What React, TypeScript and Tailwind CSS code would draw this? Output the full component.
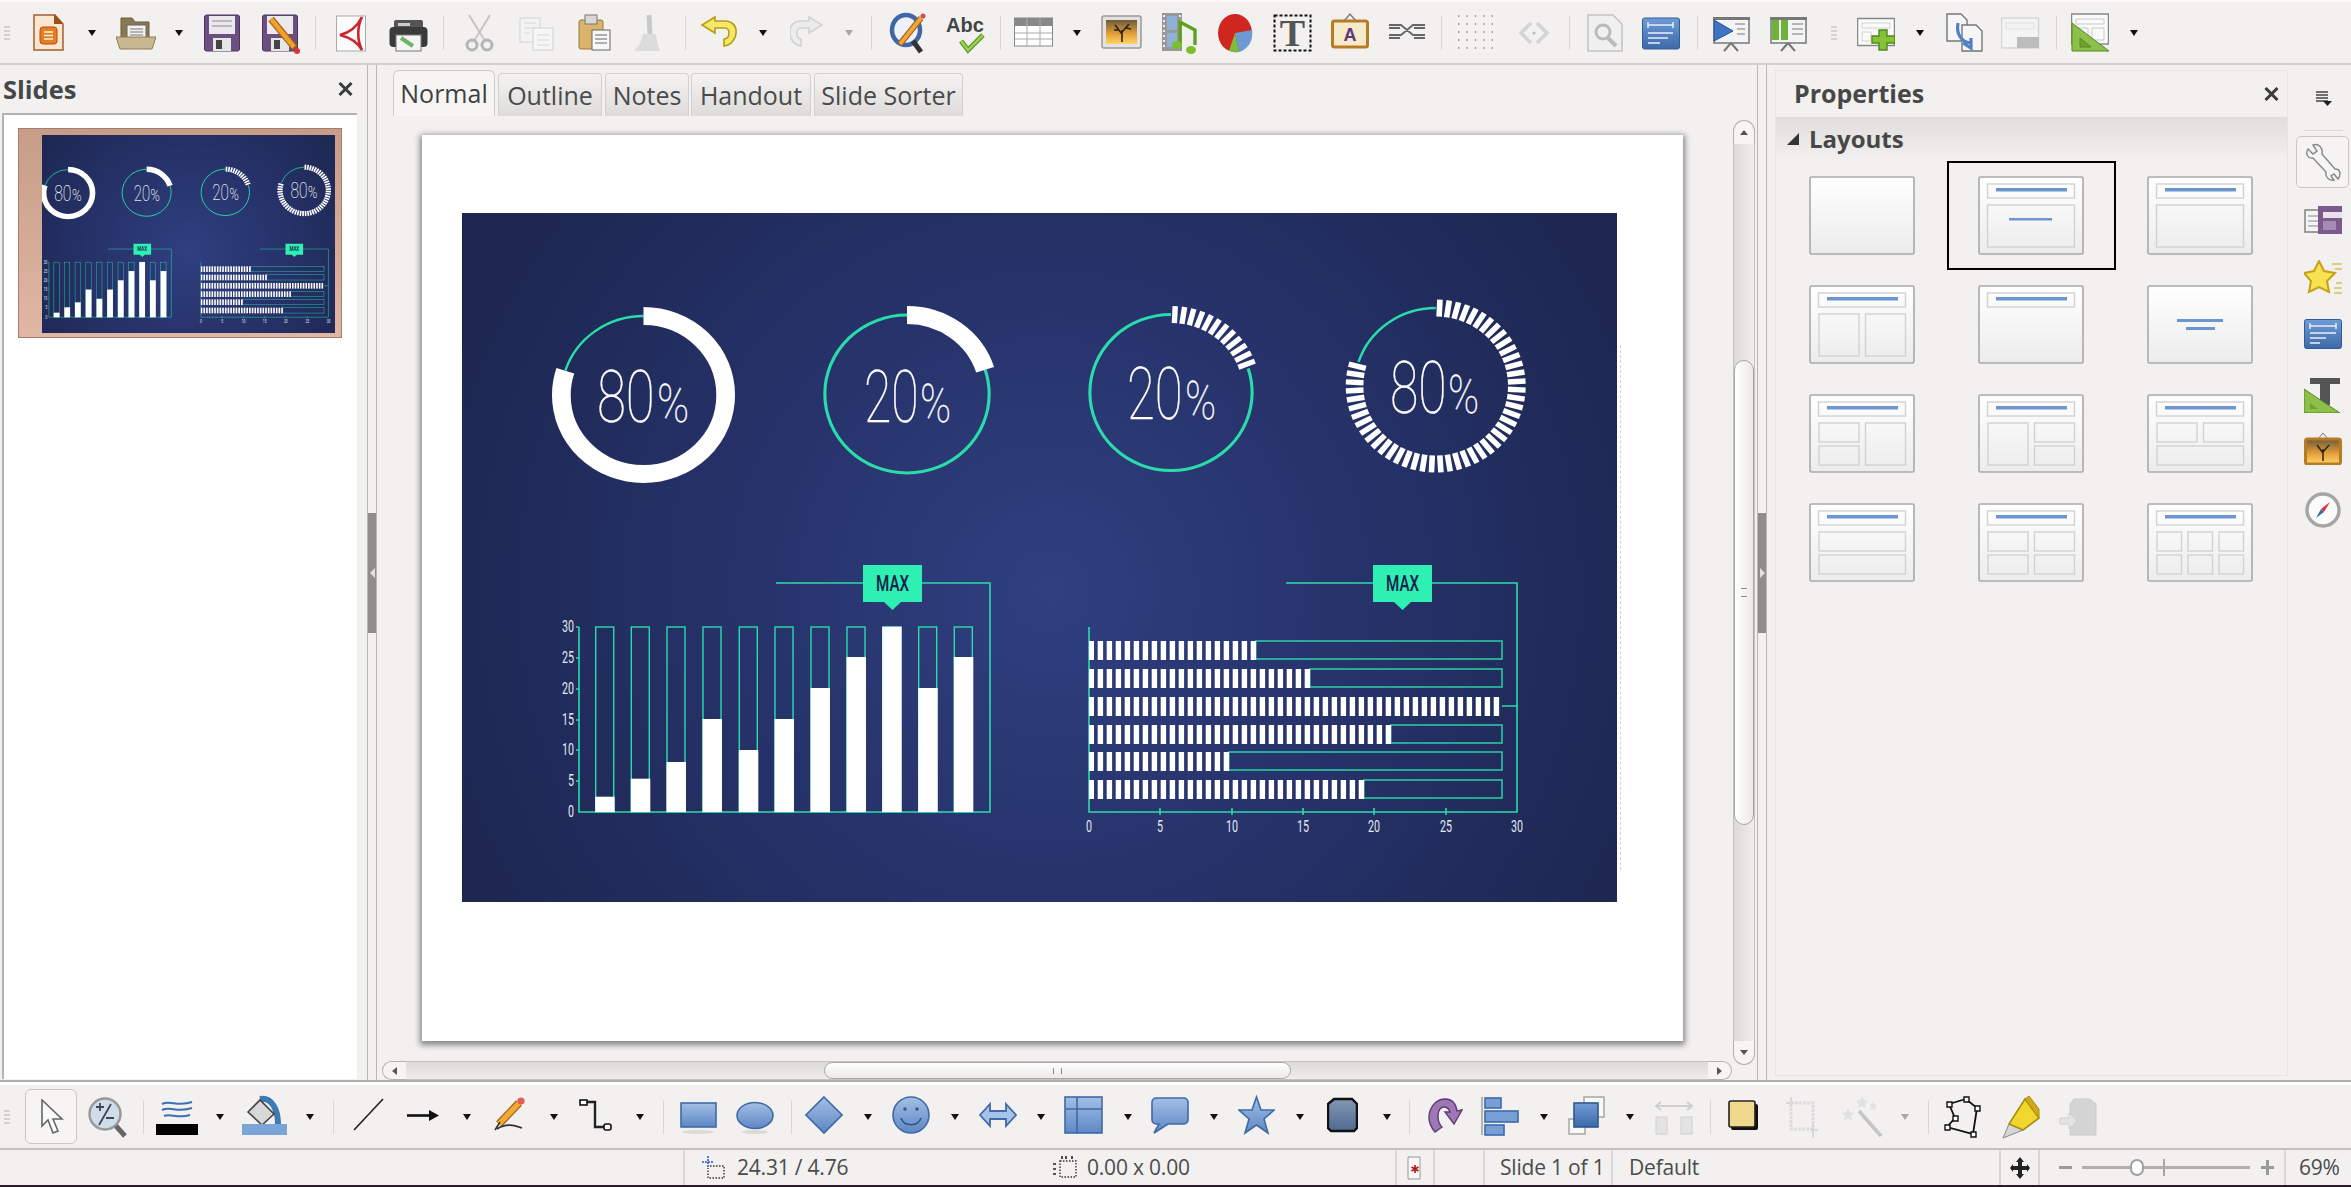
import type { ReactNode } from 'react';

const UI = "font-['Open_Sans','Noto_Sans',sans-serif]";

function Ic({ w, c, h = 46, children }: { w: number; c?: string; h?: number; children: ReactNode }) {
  return (
    <svg width={w} height={h} viewBox={`0 0 ${w} ${h}`} className={`shrink-0 ${c ?? ''}`}>
      {children}
    </svg>
  );
}

function Dd({ c, off }: { c: string; off?: boolean }) {
  return (
    <svg width={8} height={6} viewBox="0 0 8 6" className={`shrink-0 ${c}`}>
      <path d="M0 0H8L4 6Z" fill={off ? '#a8a8a8' : '#111'} />
    </svg>
  );
}

function Sep({ c }: { c: string }) {
  return <div className={`h-[34px] w-px shrink-0 bg-[#d9d7d4] ${c}`} />;
}

function Grip({ c }: { c: string }) {
  return (
    <svg width={6} height={14} viewBox="0 0 6 14" className={`shrink-0 ${c}`}>
      <path d="M0 1H6M0 5H6M0 9H6M0 13H6" stroke="#c9c7c4" strokeWidth="1.5" />
    </svg>
  );
}

function Defs() {
  return (
    <svg width={0} height={0} className="absolute">
      <defs>
        <radialGradient id="slideBg" gradientUnits="userSpaceOnUse" cx="1050" cy="590" r="640">
          <stop offset="0" stopColor="#2f3f80" />
          <stop offset="0.5" stopColor="#263269" />
          <stop offset="1" stopColor="#1d2751" />
        </radialGradient>
        <linearGradient id="shape" x1="0" y1="0" x2="0" y2="1">
          <stop offset="0" stopColor="#a3bfe6" />
          <stop offset="1" stopColor="#5d87c4" />
        </linearGradient>
        <linearGradient id="sunset" x1="0" y1="0" x2="0" y2="1">
          <stop offset="0" stopColor="#6d5a3a" />
          <stop offset="0.6" stopColor="#e9a13a" />
          <stop offset="1" stopColor="#fbd36a" />
        </linearGradient>
        <linearGradient id="thumbBg" x1="0" y1="0" x2="0" y2="1">
          <stop offset="0" stopColor="#ffffff" />
          <stop offset="1" stopColor="#ececec" />
        </linearGradient>
        <linearGradient id="blueBox" x1="0" y1="0" x2="0" y2="1">
          <stop offset="0" stopColor="#6f9bd6" />
          <stop offset="1" stopColor="#3e69a8" />
        </linearGradient>
        <linearGradient id="cube" x1="0" y1="0" x2="0" y2="1">
          <stop offset="0" stopColor="#8398b4" />
          <stop offset="1" stopColor="#4f6a8f" />
        </linearGradient>
      </defs>
    </svg>
  );
}

const TEAL = '#2bdcab';

function Ring({ cx, cy, r, sw, end, line, ticks, tw }: { cx: number; cy: number; r: number; sw: number; end: number; line: number; ticks?: number; tw?: number }) {
  const rest = 360 - end;
  return (
    <g transform={`translate(${cx} ${cy}) scale(1.04 1) rotate(-90)`}>
      <circle r={r} fill="none" stroke={TEAL} strokeWidth={line} pathLength={360} strokeDasharray={`${rest} ${end}`} strokeDashoffset={-end} />
      {ticks ? (
        Array.from({ length: ticks }, (_, i) => (
          <line
            key={i}
            x1={r - sw / 2}
            x2={r + sw / 2}
            y1={0}
            y2={0}
            stroke="#fff"
            strokeWidth={tw}
            transform={`rotate(${((i + 0.45) * end) / ticks})`}
          />
        ))
      ) : (
        <circle r={r} fill="none" stroke="#fff" strokeWidth={sw} pathLength={360} strokeDasharray={`${end} ${rest}`} />
      )}
    </g>
  );
}

// thin digits squeezed sideways, the slide's typeface is far narrower than Roboto
function Pct({ v, x, y, w, px, pw }: { v: string; x: number; y: number; w: number; px: number; pw: number }) {
  return (
    <g fill="#fff" stroke="#fff" strokeWidth="0.35" fontFamily="Roboto, sans-serif" fontWeight={100}>
      <text transform={`translate(${x} ${y}) scale(${w / 80.3} 1)`} fontSize={73}>{v}</text>
      <text transform={`translate(${px} ${y}) scale(${pw / 38} 1)`} fontSize={53}>%</text>
    </g>
  );
}

function MaxTag({ x }: { x: number }) {
  return (
    <g>
      <path d={`M${x} 565H${x + 59}V602H${x + 38}L${x + 29.5} 610L${x + 21} 602H${x}Z`} fill="#2ef0b3" />
      <text x={x + 13} y={591} fontSize={22} fontWeight={500} fill="#14204a" fontFamily="Roboto, sans-serif" textLength={33} lengthAdjust="spacingAndGlyphs">MAX</text>
    </g>
  );
}

const BARS = [
  [595.7, 796.7], [631.3, 778.7], [667, 762], [703, 719], [739.3, 750], [775, 719],
  [811, 688], [847, 657], [882.7, 626.7], [918.7, 688], [954.3, 657],
];
const HROWS = [
  [641, 17], [669, 23], [697, 44], [725, 32], [752, 14], [780, 29],
];

function SlideArt({ box, w, h }: { box: string; w: number; h: number }) {
  return (
    <svg width={w} height={h} viewBox={box} preserveAspectRatio="none" className="block shrink-0">
      <rect x="400" y="150" width="1300" height="800" fill="url(#slideBg)" />
      <Ring cx={643.5} cy={395} r={79} sw={18} end={288} line={2.4} />
      <Ring cx={907} cy={394} r={79} sw={18} end={72} line={3} />
      <Ring cx={1171} cy={392.5} r={78} sw={17} end={72} line={3} ticks={12} tw={5.2} />
      <Ring cx={1435.7} cy={386} r={78} sw={17} end={288} line={2.4} ticks={48} tw={5.4} />
      <Pct v="80" x={597} y={422} w={58} px={657} pw={31} />
      <Pct v="20" x={864} y={422} w={55} px={920} pw={30} />
      <Pct v="20" x={1127} y={419} w={56} px={1185} pw={30} />
      <Pct v="80" x={1390} y={413} w={57} px={1448} pw={30} />

      <path d="M776 583H990V812H579V627M576 627H579M576 658H579M576 689H579M576 720H579M576 750H579M576 781H579" fill="none" stroke={TEAL} strokeWidth="1.6" />
      {BARS.map(([x, top]) => (
        <g key={x}>
          <rect x={x} y={627} width={18} height={185} fill="none" stroke={TEAL} strokeWidth="1.4" />
          <rect x={x - 0.5} y={top} width={19.5} height={812 - top} fill="#fff" />
        </g>
      ))}
      <MaxTag x={863} />
      {[['30', 632], ['25', 663], ['20', 694], ['15', 725], ['10', 755], ['5', 786], ['0', 817]].map(([t, y]) => (
        <text key={t} x={574} y={y} textAnchor="end" fontSize={16} fill="#e6e9f2" fontFamily="Roboto, sans-serif" fontWeight={400} textLength={t.length === 2 ? 12 : 6} lengthAdjust="spacingAndGlyphs">{t}</text>
      ))}

      <path d="M1286 583H1517V812H1089V627M1160 808V815M1232 808V815M1303 808V815M1374 808V815M1446 808V815M1502 706H1517" fill="none" stroke={TEAL} strokeWidth="1.6" />
      {HROWS.map(([y, n]) => {
        const end = 1097.7 + 9 * n + 5;
        return (
          <g key={y}>
            {n < 40 && <rect x={end} y={y} width={1502 - end} height={18} fill="none" stroke={TEAL} strokeWidth="1.4" />}
            <rect x={1089} y={y} width={5} height={19} fill="#fff" />
            {Array.from({ length: n + 1 }, (_, k) => (
              <rect key={k} x={1097.7 + 9 * k} y={y} width={5.4} height={19} fill="#fff" />
            ))}
          </g>
        );
      })}
      <MaxTag x={1373} />
      {[['0', 1089], ['5', 1160], ['10', 1232], ['15', 1303], ['20', 1374], ['25', 1446], ['30', 1517]].map(([t, x]) => (
        <text key={t} x={x} y={832} textAnchor="middle" fontSize={16} fill="#e6e9f2" fontFamily="Roboto, sans-serif" fontWeight={400} textLength={t.length === 2 ? 12 : 6} lengthAdjust="spacingAndGlyphs">{t}</text>
      ))}
    </svg>
  );
}

function TopToolbar() {
  return (
    <div className="flex h-[63px] shrink-0 items-center border-t-2 border-[#fafafa] pl-[4px]">
      <Grip c="" />
      <Ic w={31} c="ml-[23px]">
        <path d="M1 5H22L30 14V40H1Z" fill="#f9e7d3" stroke="#a55f2a" strokeWidth="1.5" />
        <path d="M21 4L30 14H21Z" fill="#9c4f1c" />
        <rect x="7" y="17" width="17" height="17" rx="3" fill="#e67e22" stroke="#b34d10" />
        <path d="M11 22H20M11 25.5H20M11 29H20" stroke="#fff2e0" strokeWidth="1.5" />
      </Ic>
      <Dd c="ml-[24px]" />
      <Ic w={40} c="ml-[20px]">
        <path d="M5 8H16L19 12H33V28H5Z" fill="#8b7852" stroke="#6a5a3a" />
        <rect x="11" y="15" width="19" height="15" fill="#f1f1ef" stroke="#666" />
        <path d="M14 19H27M14 22H27M14 25H27" stroke="#777" />
        <path d="M0 27H40L36 39H4Z" fill="#c9b88f" stroke="#8e7c57" />
      </Ic>
      <Dd c="ml-[19px]" />
      <Ic w={36} c="ml-[21px]">
        <rect x="0.5" y="5" width="35" height="36" rx="2" fill="#6b4f80" stroke="#4b3560" />
        <rect x="5" y="6" width="26" height="18" fill="#ebe8ee" />
        <path d="M8 11H28M8 16H28" stroke="#aaa" strokeWidth="1.4" />
        <rect x="9" y="28" width="18" height="13" fill="#e6e6e6" />
        <rect x="12" y="30" width="6" height="9" fill="#444" />
      </Ic>
      <Ic w={39} c="ml-[22px]">
        <rect x="0.5" y="5" width="35" height="36" rx="2" fill="#6b4f80" stroke="#4b3560" />
        <rect x="5" y="6" width="26" height="18" fill="#ebe8ee" />
        <rect x="9" y="28" width="18" height="13" fill="#e6e6e6" />
        <rect x="12" y="30" width="6" height="9" fill="#444" />
        <path d="M9 9L33 38" stroke="#a85f14" strokeWidth="7" />
        <path d="M9 9L32 37" stroke="#f0a22f" strokeWidth="4.5" />
        <circle cx="35" cy="41" r="3" fill="#d9343a" />
      </Ic>
      <Sep c="ml-[14px]" />
      <Ic w={30} c="ml-[20px]">
        <rect x="0.5" y="6" width="29" height="35" fill="#fbfbfb" stroke="#aaa" />
        <path d="M26 7C21 17 12 23 4 25C12 27 21 31 26 40C21 30 21 17 26 7Z" fill="none" stroke="#c9252b" strokeWidth="2.6" />
      </Ic>
      <Ic w={39} c="ml-[23px]">
        <rect x="5" y="10" width="29" height="10" rx="2" fill="#555" />
        <rect x="0.5" y="17" width="38" height="20" rx="4" fill="#3a3a3a" />
        <rect x="9" y="13" width="12" height="3" fill="#ccc" />
        <rect x="7" y="25" width="25" height="16" fill="#f4f4f4" stroke="#777" />
        <path d="M12 28L24 36" stroke="#6fb36a" strokeWidth="4" />
      </Ic>
      <Sep c="ml-[15px]" />
      <Ic w={29} c="ml-[21px]">
        <path d="M4 5L20 31M25 5L9 31" stroke="#c5c5c5" strokeWidth="2" />
        <circle cx="7" cy="35" r="5" fill="none" stroke="#b5b5b5" strokeWidth="3" />
        <circle cx="22" cy="35" r="5" fill="none" stroke="#b5b5b5" strokeWidth="3" />
      </Ic>
      <Ic w={35} c="ml-[25px]">
        <rect x="1" y="8" width="20" height="24" fill="#f3f3f3" stroke="#d2d2d2" />
        <rect x="14" y="18" width="20" height="22" fill="#f6f6f6" stroke="#d2d2d2" />
        <path d="M5 13H17M5 18H17M5 23H11M18 25H30M18 30H30M18 35H30" stroke="#d8d8d8" />
      </Ic>
      <Ic w={33} c="ml-[24px]">
        <rect x="1" y="10" width="24" height="29" rx="2" fill="#dcb36a" stroke="#9b7a3d" />
        <rect x="7" y="5" width="12" height="9" fill="#d8d8d8" stroke="#777" />
        <rect x="14" y="20" width="18" height="20" fill="#f7f7f7" stroke="#666" />
        <path d="M17 25H29M17 29H29M17 33H29" stroke="#666" />
      </Ic>
      <Ic w={28} c="ml-[22px]">
        <path d="M16 5L17 24" stroke="#c9c9c9" strokeWidth="5" />
        <path d="M10 24H23C24 32 25 36 27 41H1C6 36 9 30 10 24Z" fill="#dcdcdc" />
      </Ic>
      <Sep c="ml-[24px]" />
      <Ic w={40} c="ml-[14px]">
        <path d="M15 7L2 15L15 23V18H25C30 18 31 28 24 29V36C39 34 41 11 25 11H15Z" fill="#f4e76a" stroke="#b89c14" strokeWidth="1.6" />
      </Ic>
      <Dd c="ml-[19px]" />
      <Ic w={33} c="ml-[23px]">
        <path d="M19 7L32 15L19 23V18H11C6 18 5 28 11 29V36C-3 34 -5 11 11 11H19Z" fill="#ececec" stroke="#d2d2d2" strokeWidth="1.6" />
      </Ic>
      <Dd c="ml-[22px]" off />
      <Sep c="ml-[18px]" />
      <Ic w={40} c="ml-[16px]">
        <ellipse cx="18" cy="20" rx="14" ry="15" fill="#eef2f8" stroke="#3f66a8" strokeWidth="4.5" />
        <path d="M25 31L33 42" stroke="#333" strokeWidth="5" />
        <path d="M12 34L33 8" stroke="#a9611a" strokeWidth="6" />
        <path d="M12 34L33 8" stroke="#f0a737" strokeWidth="3.6" />
        <circle cx="35" cy="6" r="2.5" fill="#d84a4a" />
      </Ic>
      <Ic w={40} c="ml-[17px]">
        <text x="1" y="22" fontSize="20" fontWeight="700" fill="#444" fontFamily="Liberation Sans, sans-serif">Abc</text>
        <path d="M16 31L23 40L38 25" fill="none" stroke="#5d9a2c" strokeWidth="5" />
        <path d="M16 31L23 40L38 25" fill="none" stroke="#9ed44f" strokeWidth="2.4" />
      </Ic>
      <Sep c="ml-[15px]" />
      <Ic w={39} c="ml-[13px]">
        <rect x="0.5" y="8" width="38" height="28" fill="#fff" stroke="#888" />
        <rect x="1" y="8" width="37" height="8" fill="#888" />
        <path d="M13 8V36M26 8V36M1 23H38M1 29H38" stroke="#aaa" />
      </Ic>
      <Dd c="ml-[20px]" />
      <Ic w={41} c="ml-[20px]">
        <rect x="1" y="6" width="39" height="32" rx="2" fill="#e2e2e0" stroke="#999" strokeWidth="1.5" />
        <rect x="5" y="10" width="31" height="24" fill="url(#sunset)" />
        <path d="M21 32V20M21 24L14 15M21 22L28 14M17 20L13 20M25 18L30 19" stroke="#2b241a" strokeWidth="1.6" fill="none" />
      </Ic>
      <Ic w={35} c="ml-[20px]">
        <rect x="0" y="3" width="20" height="38" fill="#999" />
        <path d="M2 5V39M18 5V39" stroke="#eee" strokeWidth="2" strokeDasharray="2 3" />
        <rect x="5" y="6" width="10" height="14" fill="#8fb1d8" />
        <rect x="5" y="23" width="10" height="14" fill="#8fb1d8" />
        <path d="M18 34V12L33 20V35" fill="none" stroke="#5fa11c" strokeWidth="3.4" />
        <ellipse cx="15" cy="35" rx="5" ry="4" fill="#7ac02a" />
        <ellipse cx="29" cy="40" rx="5" ry="4" fill="#7ac02a" />
      </Ic>
      <Ic w={35} c="ml-[21px]">
        <ellipse cx="17" cy="23" rx="17" ry="19" fill="#d0261f" />
        <path d="M17 23L34 20C36 32 28 40 21 42Z" fill="#6b9bd2" />
        <path d="M17 23L21 42C18 43 14 42 11 41Z" fill="#7fbc3b" />
      </Ic>
      <Ic w={39} c="ml-[20px]">
        <rect x="1.5" y="5.5" width="36" height="35" fill="none" stroke="#111" strokeWidth="2" strokeDasharray="3 2" />
        <text x="19.5" y="36" textAnchor="middle" fontSize="38" fontWeight="700" fill="#555" fontFamily="Liberation Serif, serif">T</text>
      </Ic>
      <Ic w={38} c="ml-[19px]">
        <path d="M13 11L19 4L25 11" fill="none" stroke="#777" strokeWidth="1.4" />
        <rect x="1.5" y="11" width="35" height="26" rx="2" fill="#f6eac8" stroke="#b67c25" strokeWidth="3" />
        <text x="19" y="31" textAnchor="middle" fontSize="18" fontWeight="700" fill="#5c3a80" fontFamily="Liberation Sans, sans-serif">A</text>
      </Ic>
      <Ic w={38} c="ml-[19px]">
        <path d="M1 15H13L25 25H37M1 18H12M26 28H37M37 15H25L13 25H1M37 18H26M12 28H1" fill="none" stroke="#666" strokeWidth="1.8" />
      </Ic>
      <Sep c="ml-[15px]" />
      <Ic w={38} c="ml-[15px]">
        <path d="M1 6H38M1 14H38M1 22H38M1 30H38M1 38H38" stroke="#888" strokeWidth="1.4" strokeDasharray="1.4 7" />
      </Ic>
      <Ic w={36} c="ml-[21px]">
        <path d="M15 13L5 23L15 33M21 13L31 23L21 33" fill="none" stroke="#d4d4d4" strokeWidth="3.4" />
        <circle cx="18" cy="23" r="1.5" fill="#bbb" />
      </Ic>
      <Sep c="ml-[17px]" />
      <Ic w={36} c="ml-[17px]">
        <path d="M1 5H26L35 14V41H1Z" fill="#f0f0f0" stroke="#c5c5c5" strokeWidth="1.6" />
        <circle cx="16" cy="22" r="7" fill="none" stroke="#bbb" strokeWidth="3" />
        <path d="M21 28L29 36" stroke="#bbb" strokeWidth="4" />
      </Ic>
      <Ic w={38} c="ml-[19px]">
        <rect x="0.5" y="8" width="37" height="31" rx="2" fill="url(#blueBox)" stroke="#335b97" />
        <path d="M6 15H31M6 12V18M31 12V18M6 23H31M6 28H26M6 33H18" stroke="#e6eefa" strokeWidth="1.5" />
      </Ic>
      <Sep c="ml-[17px]" />
      <Ic w={37} c="ml-[15px]">
        <rect x="1" y="8" width="35" height="25" fill="#f4f4f4" stroke="#777" strokeWidth="1.5" />
        <rect x="0" y="7" width="37" height="3" fill="#777" />
        <path d="M1 10L20 21L1 31Z" fill="#3d74c4" stroke="#25528f" />
        <path d="M22 14H32M24 19H32M24 24H32" stroke="#777" />
        <path d="M18 33L11 41M18 33L25 41" stroke="#777" strokeWidth="2" />
      </Ic>
      <Ic w={37} c="ml-[20px]">
        <rect x="1" y="8" width="35" height="25" fill="#f4f4f4" stroke="#777" strokeWidth="1.5" />
        <rect x="0" y="7" width="37" height="3" fill="#777" />
        <rect x="2" y="10" width="7" height="20" fill="#6fb23a" />
        <rect x="11" y="10" width="7" height="20" fill="#6fb23a" />
        <path d="M22 14H33M22 19H33M22 24H33" stroke="#777" />
        <path d="M18 33L11 41M18 33L25 41" stroke="#777" strokeWidth="2" />
      </Ic>
      <Grip c="ml-[24px]" />
      <Ic w={38} c="ml-[20px]">
        <rect x="0.5" y="8.5" width="37" height="27" fill="#fafafa" stroke="#888" strokeWidth="1.5" />
        <path d="M5 13H33V18H5ZM5 22H14V31H5Z" fill="none" stroke="#d2d2d2" />
        <path d="M22 20H30V26H38V33H30V40H22V33H15V26H22Z" fill="#84c23a" stroke="#4f8a14" strokeWidth="1.4" />
      </Ic>
      <Dd c="ml-[21px]" />
      <Ic w={37} c="ml-[22px]">
        <path d="M1 4H15L21 10V31H1Z" fill="#f6f6f6" stroke="#777" strokeWidth="1.4" />
        <path d="M16 15H30L36 21V41H16Z" fill="#f6f6f6" stroke="#777" strokeWidth="1.4" />
        <path d="M12 13C10 24 15 32 25 33M25 28V38L17 33" fill="none" stroke="#4d80c4" strokeWidth="3.2" />
      </Ic>
      <Ic w={39} c="ml-[18px]">
        <rect x="0.5" y="8" width="37" height="30" fill="#f4f4f4" stroke="#d6d6d6" strokeWidth="1.5" />
        <path d="M5 13H33V19H5Z" fill="none" stroke="#e0e0e0" />
        <rect x="16" y="27" width="22" height="11" fill="#bcbcbc" />
      </Ic>
      <Sep c="ml-[16px]" />
      <Ic w={38} c="ml-[14px]">
        <rect x="0.5" y="4" width="37" height="30" fill="#fafafa" stroke="#888" strokeWidth="1.5" />
        <path d="M5 9H33V14H5ZM5 18H17V30H5ZM21 18H33V30H21Z" fill="none" stroke="#c9c9c9" />
        <path d="M1 13L38 41H1Z" fill="#8cc04a" stroke="#55891f" />
        <path d="M9 28L20 37H9Z" fill="#6ea431" stroke="#55891f" />
      </Ic>
      <Dd c="ml-[21px]" />
    </div>
  );
}

function BottomToolbar() {
  return (
    <div className="flex h-[63px] shrink-0 items-center pl-[4px]">
      <Grip c="" />
      <div className="ml-[15px] flex h-[55px] w-[52px] shrink-0 items-center justify-center rounded-[6px] border border-[#c9c7c4] bg-[#f6f5f4]">
        <svg width={26} height={36} viewBox="0 0 26 36">
          <path d="M4 1V27L10 21L15 34L20 32L15 20H24Z" fill="#fafafa" stroke="#666" strokeWidth="1.6" />
        </svg>
      </div>
      <Ic w={39} c="ml-[11px]">
        <circle cx="17" cy="20" r="15.5" fill="#cfddea" stroke="#999" strokeWidth="2.5" />
        <path d="M12 9V17M8 13H16M18 24H26M23 10L11 31" stroke="#445" strokeWidth="1.8" />
        <path d="M28 32L37 42" stroke="#666" strokeWidth="5" />
      </Ic>
      <Sep c="ml-[16px]" />
      <Ic w={42} c="ml-[12px]">
        <path d="M6 10C14 6 22 13 36 8M6 16C14 12 22 19 36 14M8 22C14 19 22 25 34 21" fill="none" stroke="#3e6fb5" strokeWidth="2" />
        <rect x="0" y="30" width="42" height="11" fill="#000" />
      </Ic>
      <Dd c="ml-[18px]" />
      <Ic w={45} c="ml-[18px]">
        <path d="M18 5C30 3 36 16 36 30" fill="none" stroke="#3c79b5" strokeWidth="6" />
        <path d="M6 18L18 6L32 20L20 31Z" fill="#d8d8d8" stroke="#444" strokeWidth="1.6" />
        <rect x="0" y="30" width="45" height="11" fill="#7ba4d8" />
      </Ic>
      <Dd c="ml-[19px]" />
      <Sep c="ml-[19px]" />
      <Ic w={31} c="ml-[19px]">
        <path d="M1 36L30 5" stroke="#222" strokeWidth="1.6" />
      </Ic>
      <Ic w={32} c="ml-[23px]">
        <path d="M0 21.5H24" stroke="#111" strokeWidth="2.6" />
        <path d="M22 16L32 21.5L22 27Z" fill="#111" />
      </Ic>
      <Dd c="ml-[24px]" />
      <Ic w={32} c="ml-[23px]">
        <path d="M5 30L25 9" stroke="#a96414" strokeWidth="8" />
        <path d="M5 30L25 9" stroke="#f3a93a" strokeWidth="5.4" />
        <circle cx="27" cy="7" r="3.6" fill="#e25b5b" />
        <path d="M1 36L6 28M3 35C12 29 20 31 28 34" fill="none" stroke="#333" strokeWidth="1.6" />
      </Ic>
      <Dd c="ml-[24px]" />
      <Ic w={33} c="ml-[21px]">
        <path d="M7 8H16V33H26" fill="none" stroke="#222" strokeWidth="2.4" />
        <rect x="1" y="6" width="7" height="5" fill="#fff" stroke="#111" strokeWidth="1.6" />
        <rect x="25" y="30" width="7" height="6" rx="2" fill="#fff" stroke="#111" strokeWidth="1.6" />
      </Ic>
      <Dd c="ml-[24px]" />
      <Sep c="ml-[19px]" />
      <Ic w={37} c="ml-[16px]">
        <rect x="1" y="9" width="35" height="24" fill="url(#shape)" stroke="#3f6aa6" strokeWidth="1.6" />
        <ellipse cx="18" cy="38" rx="16" ry="2" fill="#dcdad8" />
      </Ic>
      <Ic w={38} c="ml-[19px]">
        <ellipse cx="19" cy="21.5" rx="18" ry="13" fill="url(#shape)" stroke="#3f6aa6" strokeWidth="1.6" />
        <ellipse cx="19" cy="38" rx="13" ry="2" fill="#dcdad8" />
      </Ic>
      <Sep c="ml-[17px]" />
      <Ic w={38} c="ml-[13px]">
        <path d="M19 3L37 21L19 39L1 21Z" fill="url(#shape)" stroke="#3f6aa6" strokeWidth="1.6" />
      </Ic>
      <Dd c="ml-[21px]" />
      <Ic w={38} c="ml-[20px]">
        <ellipse cx="19" cy="21" rx="18" ry="18" fill="url(#shape)" stroke="#3f6aa6" strokeWidth="1.6" />
        <circle cx="13" cy="15" r="1.7" fill="#33558a" />
        <circle cx="25" cy="15" r="1.7" fill="#33558a" />
        <path d="M9 24C12 33 26 33 29 24" fill="none" stroke="#33558a" strokeWidth="1.6" />
      </Ic>
      <Dd c="ml-[21px]" />
      <Ic w={38} c="ml-[20px]">
        <path d="M1 21L11 10V17H27V10L37 21L27 32V25H11V32Z" fill="#a8c3e8" stroke="#3f6aa6" strokeWidth="1.8" />
      </Ic>
      <Dd c="ml-[20px]" />
      <Ic w={39} c="ml-[19px]">
        <rect x="1" y="3" width="37" height="36" fill="url(#shape)" stroke="#3f6aa6" strokeWidth="1.6" />
        <path d="M13 3V39M1 15H38" stroke="#3f6aa6" strokeWidth="1.6" />
      </Ic>
      <Dd c="ml-[21px]" />
      <Ic w={38} c="ml-[19px]">
        <path d="M5 4H33C35 4 37 6 37 8V26C37 28 35 30 33 30H17L3 39L8 30H5C3 30 1 28 1 26V8C1 6 3 4 5 4Z" fill="url(#shape)" stroke="#3f6aa6" strokeWidth="1.6" />
      </Ic>
      <Dd c="ml-[21px]" />
      <Ic w={37} c="ml-[20px]">
        <path d="M18.5 3L23 16H36L26 25L30 39L18.5 31L7 39L11 25L1 16H14Z" fill="url(#shape)" stroke="#3f6aa6" strokeWidth="1.6" />
      </Ic>
      <Dd c="ml-[21px]" />
      <Ic w={31} c="ml-[23px]">
        <path d="M7 5H25L30 10V34L27 37H4L1 34V10Z" fill="url(#cube)" stroke="#111" strokeWidth="2.4" />
      </Ic>
      <Dd c="ml-[25px]" />
      <Sep c="ml-[18px]" />
      <Ic w={38} c="ml-[15px]">
        <path d="M10 38C-2 24 6 5 20 5C27 5 31 10 32 17L37 16L29 30L20 18L25 18C24 15 22 13 19 13C12 13 11 27 17 33Z" fill="#9f77b5" stroke="#5e3a78" strokeWidth="1.4" />
      </Ic>
      <Ic w={38} c="ml-[18px]">
        <path d="M1 3V41" stroke="#777" />
        <rect x="4" y="4" width="16" height="10" fill="#79a0d6" stroke="#3f6aa6" strokeWidth="1.6" />
        <rect x="4" y="17" width="33" height="11" fill="#79a0d6" stroke="#3f6aa6" strokeWidth="1.6" />
        <rect x="4" y="31" width="19" height="10" fill="#79a0d6" stroke="#3f6aa6" strokeWidth="1.6" />
      </Ic>
      <Dd c="ml-[21px]" />
      <Ic w={37} c="ml-[20px]">
        <rect x="16" y="3" width="20" height="20" fill="#f8f8f8" stroke="#aaa" strokeWidth="1.6" />
        <rect x="1" y="25" width="16" height="15" fill="#f8f8f8" stroke="#aaa" strokeWidth="1.6" />
        <rect x="6" y="9" width="24" height="24" fill="url(#blueBox)" stroke="#2f5891" strokeWidth="1.6" />
      </Ic>
      <Dd c="ml-[21px]" />
      <Ic w={38} c="ml-[21px]">
        <path d="M6 8L1 12L6 16M32 8L37 12L32 16M2 12H36" fill="none" stroke="#cfcfcf" strokeWidth="2" />
        <rect x="1" y="23" width="11" height="17" fill="#e3e3e3" stroke="#cfcfcf" />
        <rect x="26" y="23" width="11" height="17" fill="#e3e3e3" stroke="#cfcfcf" />
      </Ic>
      <Sep c="ml-[17px]" />
      <Ic w={30} c="ml-[17px]">
        <rect x="3" y="10" width="27" height="26" rx="2" fill="#111" />
        <rect x="1" y="7" width="26" height="26" rx="2" fill="#f0d98c" stroke="#222" strokeWidth="1.6" />
      </Ic>
      <Ic w={32} c="ml-[28px]">
        <rect x="5" y="9" width="22" height="26" fill="none" stroke="#dcdcdc" strokeWidth="3" strokeDasharray="3 1" />
        <path d="M0 9H8M5 3V12M25 36H32M27 30V44" stroke="#d8d8d8" strokeWidth="2" />
      </Ic>
      <Ic w={41} c="ml-[24px]">
        <path d="M17 17L39 42" stroke="#c5c5c5" strokeWidth="3.6" />
        <path d="M6 14L8 18L12 19L9 22L10 27L6 24L2 27L3 22L0 19L4 18ZM20 2L22 6L26 7L23 10L24 14L20 12L16 14L17 10L14 7L18 6ZM31 7L32 10L35 11L33 13L34 16L31 15L28 16L29 13L27 11L30 10Z" fill="#e1e1e1" />
      </Ic>
      <Dd c="ml-[18px]" off />
      <Sep c="ml-[19px]" />
      <Ic w={37} c="ml-[15px]">
        <path d="M5 10L22 5L33 14L29 40L3 33L11 24Z" fill="none" stroke="#111" strokeWidth="1.8" />
        <path d="M3 8H8V13H3ZM20 3H25V8H20ZM31 12H36V17H31ZM27 38H32V43H27ZM1 31H6V36H1ZM9 22H14V27H9Z" fill="#fff" stroke="#111" strokeWidth="1.4" />
      </Ic>
      <Ic w={40} c="ml-[20px]">
        <path d="M2 44L8 30L22 36Z" fill="#d6d6d6" stroke="#888" />
        <path d="M8 30L24 5L38 24L22 36Z" fill="#f1d62d" stroke="#a88f12" strokeWidth="1.6" />
        <path d="M24 5L28 2L38 15V24Z" fill="#cfa91d" stroke="#a88f12" />
      </Ic>
      <Ic w={38} c="ml-[18px]">
        <path d="M11 10L15 5H31L37 10V41H11Z" fill="#d4d4d4" stroke="#cbcbcb" />
        <path d="M1 24H10V19L18 27L10 35V30H1Z" fill="#e4e4e4" stroke="#cfcfcf" />
      </Ic>
    </div>
  );
}

const CELL = 'flex h-full shrink-0 items-center border-r-2 border-[#d9d7d4]';

function StatusBar() {
  return (
    <div className={`flex h-[35px] shrink-0 text-[21px] leading-none tracking-[-0.2px] text-[#4b4b4b] ${UI}`}>
      <div className={`${CELL} w-[685px]`} />
      <div className={`${CELL} w-[712px] pl-[16px]`}>
        <svg width={24} height={26} viewBox="0 0 24 26" className="shrink-0">
          <path d="M7 1V13M1 7H13" stroke="#3355cc" strokeWidth="1.6" strokeDasharray="2 1" />
          <path d="M9 11H23V23H7V13" fill="none" stroke="#333" strokeWidth="1.4" strokeDasharray="1.5 1.5" />
        </svg>
        <span className="ml-[12px] w-[315px] shrink-0">24.31 / 4.76</span>
        <svg width={26} height={26} viewBox="0 0 26 26" className="shrink-0">
          <path d="M8 6H24V22H8Z" fill="none" stroke="#333" strokeWidth="1.4" strokeDasharray="1.5 1.5" />
          <path d="M10 1V4M14 1V4M20 1V4M1 9H4M1 14H4M1 19H4" stroke="#222" strokeWidth="1.6" />
        </svg>
        <span className="ml-[9px]">0.00 x 0.00</span>
      </div>
      <div className={`${CELL} w-[38px] justify-center`}>
        <svg width={16} height={24} viewBox="0 0 16 24">
          <path d="M1 1H13V23H1Z" fill="#f7f7f7" stroke="#999" />
          <path d="M8 9V17M4.5 11L11.5 15M11.5 11L4.5 15" stroke="#b01818" strokeWidth="1.6" />
        </svg>
      </div>
      <div className={`${CELL} w-[50px]`} />
      <div className={`${CELL} w-[128px] pl-[15px]`}>Slide 1 of 1</div>
      <div className={`${CELL} w-[388px] pl-[16px]`}>Default</div>
      <div className={`${CELL} w-[39px] justify-center`}>
        <svg width={22} height={24} viewBox="0 0 22 24">
          <path d="M11 1L15 6H13V10H18V8L21 12L18 16V14H13V18H15L11 23L7 18H9V14H4V16L1 12L4 8V10H9V6H7Z" fill="#222" />
        </svg>
      </div>
      <div className={`${CELL} w-[246px] pl-[19px]`}>
        <div className="h-[3px] w-[13px] shrink-0 bg-[#9a9a98]" />
        <div className="relative ml-[10px] h-[3px] w-[168px] shrink-0 bg-[#b0afad]">
          <div className="absolute left-[81px] top-[-7px] h-[17px] w-[2px] bg-[#a8a7a5]" />
          <div className="absolute left-[48px] top-[-7px] h-[17px] w-[14px] rounded-full border-2 border-[#a0a09e] bg-white" />
        </div>
        <svg width={13} height={15} viewBox="0 0 13 15" className="ml-[11px] shrink-0">
          <path d="M0 7.5H13M6.5 0V15" stroke="#9a9a98" strokeWidth="3" />
        </svg>
      </div>
      <div className="flex h-full flex-1 items-center pl-[13px]">69%</div>
    </div>
  );
}

function Splitter({ right }: { right?: boolean }) {
  return (
    <div className="flex h-full w-[10px] shrink-0 items-center border-x border-[#b9b7b4]">
      <div className="flex h-[120px] w-full items-center justify-center bg-[#8f8e8c]">
        <svg width={5} height={10} viewBox="0 0 5 10">
          <path d={right ? 'M0 0V10L5 5Z' : 'M5 0V10L0 5Z'} fill="#e2e2e2" />
        </svg>
      </div>
    </div>
  );
}

function Close({ c }: { c: string }) {
  return (
    <svg width={15} height={14} viewBox="0 0 15 14" className={`shrink-0 ${c}`}>
      <path d="M1.5 1L13.5 13M13.5 1L1.5 13" stroke="#3c3c3c" strokeWidth="3" />
    </svg>
  );
}

function SlidesPanel() {
  return (
    <div className="flex h-full w-[367px] shrink-0 flex-col">
      <div className="flex h-[48px] shrink-0 items-center justify-between">
        <span className="ml-[3px] text-[25.5px] font-bold text-[#474747]">Slides</span>
        <Close c="mr-[14px]" />
      </div>
      <div className="ml-[2px] h-[966px] w-[355px] border-l-2 border-t-2 border-[#b5b3b0] bg-white pl-[14px] pt-[13px]">
        <div className="h-[210px] w-[324px] border border-[#a67d6a] bg-linear-to-b from-[#c79d8a] to-[#e0b7a4] pl-[23px] pt-[6px]">
          <SlideArt box="556 200 983 665" w={293} h={198} />
        </div>
      </div>
    </div>
  );
}

function Tab({ label, c }: { label: string; c: string }) {
  return (
    <div className={`flex h-[43px] shrink-0 items-center justify-center rounded-t-[4px] border border-b-0 border-[#d3d1ce] bg-linear-to-b from-[#f4f3f2] to-[#dedcd9] text-[#4a4a4a] ${c}`}>
      {label}
    </div>
  );
}

function Canvas() {
  return (
    <div className="min-h-0 flex-1 overflow-hidden pl-[45px] pt-[19px]">
      <div className="flex h-[906px] w-[1261px] items-start bg-white pl-[40px] pt-[78px] shadow-[0_2px_6px_2px_rgba(0,0,0,0.45)]">
        <SlideArt box="462 213 1155 689" w={1155} h={689} />
        <div className="ml-[3px] mt-[132px] h-[525px] w-0 border-l border-dashed border-[#d0d0d0]" />
      </div>
    </div>
  );
}

function HScroll() {
  return (
    <div className="ml-[5px] flex h-[19px] w-[1350px] shrink-0 items-stretch">
      <div className="flex w-[24px] items-center justify-center rounded-l-full border border-r-0 border-[#b5b3b0] bg-[#f6f5f4]">
        <svg width={5} height={8} viewBox="0 0 5 8"><path d="M5 0V8L0 4Z" fill="#555" /></svg>
      </div>
      <div className="flex-1 border-y border-[#c5c3c0] bg-linear-to-b from-[#dcdad7] to-[#efeeec] pl-[418px]">
        <div className="flex h-full w-[467px] items-center justify-center rounded-full border border-[#a9a7a4] bg-linear-to-b from-[#ffffff] to-[#ebeae8]">
          <div className="h-[6px] w-[9px] border-x border-[#8a8a8a]" />
        </div>
      </div>
      <div className="flex w-[24px] items-center justify-center rounded-r-full border border-l-0 border-[#b5b3b0] bg-[#f6f5f4]">
        <svg width={5} height={8} viewBox="0 0 5 8"><path d="M0 0V8L5 4Z" fill="#555" /></svg>
      </div>
    </div>
  );
}

function VScroll() {
  return (
    <div className="mb-[15px] mt-[4px] flex w-[22px] shrink-0 flex-col">
      <div className="flex h-[24px] shrink-0 items-center justify-center rounded-t-full border border-b-0 border-[#b5b3b0] bg-[#f6f5f4]">
        <svg width={8} height={5} viewBox="0 0 8 5"><path d="M0 5H8L4 0Z" fill="#555" /></svg>
      </div>
      <div className="flex-1 border-x border-[#c5c3c0] bg-linear-to-r from-[#dcdad7] to-[#efeeec] pt-[216px]">
        <div className="flex h-[465px] w-full items-center justify-center rounded-full border border-[#a9a7a4] bg-linear-to-r from-[#ffffff] to-[#ebeae8]">
          <div className="h-[9px] w-[6px] border-y border-[#8a8a8a]" />
        </div>
      </div>
      <div className="flex h-[24px] shrink-0 items-center justify-center rounded-b-full border border-t-0 border-[#b5b3b0] bg-[#f6f5f4]">
        <svg width={8} height={5} viewBox="0 0 8 5"><path d="M0 0H8L4 5Z" fill="#555" /></svg>
      </div>
    </div>
  );
}

type Box = [number, number, number, number];
const TITLE: Box = [8.5, 7, 87, 14];
const LAYOUTS: { boxes: Box[]; lines: Box[] }[] = [
  { boxes: [], lines: [] },
  { boxes: [TITLE, [8.5, 28, 87, 42]], lines: [[17, 11, 71, 3.5], [30, 41, 43, 2.5]] },
  { boxes: [TITLE, [8.5, 28, 87, 42]], lines: [[17, 11, 71, 3.5]] },
  { boxes: [TITLE, [9, 28, 40, 42], [55.5, 28, 40, 42]], lines: [[17, 11, 71, 3.5]] },
  { boxes: [TITLE], lines: [[17, 11, 71, 3.5]] },
  { boxes: [], lines: [[29, 33, 46, 3], [38, 41, 29, 3]] },
  { boxes: [TITLE, [9, 28, 40, 19], [9, 51, 40, 19], [55.5, 28, 40, 42]], lines: [[17, 11, 71, 3.5]] },
  { boxes: [TITLE, [9, 28, 40, 42], [55.5, 28, 40, 19], [55.5, 51, 40, 19]], lines: [[17, 11, 71, 3.5]] },
  { boxes: [TITLE, [9, 28, 40, 19], [55.5, 28, 40, 19], [9, 51, 86.5, 19]], lines: [[17, 11, 71, 3.5]] },
  { boxes: [TITLE, [9, 28, 86.5, 19], [9, 51, 86.5, 19]], lines: [[17, 11, 71, 3.5]] },
  { boxes: [TITLE, [9, 28, 40, 19], [55.5, 28, 40, 19], [9, 51, 40, 19], [55.5, 51, 40, 19]], lines: [[17, 11, 71, 3.5]] },
  {
    boxes: [TITLE, [9, 28, 24.5, 19], [40, 28, 24.5, 19], [71, 28, 24.5, 19], [9, 51, 24.5, 19], [40, 51, 24.5, 19], [71, 51, 24.5, 19]],
    lines: [[17, 11, 71, 3.5]],
  },
];

function LayoutThumb({ boxes, lines }: { boxes: Box[]; lines: Box[] }) {
  return (
    <svg width={106} height={79} viewBox="-1 -1 106 79" className="mr-[2px]">
      <rect x="0" y="0" width="104" height="77" rx="1.5" fill="url(#thumbBg)" stroke="#a9a9a9" strokeWidth="1.6" />
      {boxes.map(([x, y, w, h]) => (
        <rect key={`${x}-${y}`} x={x} y={y} width={w} height={h} fill="none" stroke="#d2d2d2" strokeWidth="1.4" />
      ))}
      {lines.map(([x, y, w, h]) => (
        <rect key={`${x}-${y}`} x={x} y={y} width={w} height={h} fill="#6b96cf" />
      ))}
    </svg>
  );
}

function PropertiesPanel() {
  return (
    <div className="ml-[8px] mt-[5px] h-[1006px] w-[513px] shrink-0 border border-[#e6e5e3]">
      <div className="flex h-[46px] items-center justify-between pl-[18px]">
        <span className="text-[25px] font-bold text-[#474747]">Properties</span>
        <Close c="mr-[8px]" />
      </div>
      <div className="flex h-[44px] items-center bg-linear-to-b from-[#dfdedc] to-[#f2f1f0] pl-[11px]">
        <svg width={12} height={12} viewBox="0 0 12 12" className="shrink-0">
          <path d="M12 0V12H0Z" fill="#333" />
        </svg>
        <span className="ml-[10px] text-[24px] font-bold text-[#474747]">Layouts</span>
      </div>
      <div className="ml-[2px] grid w-[507px] grid-cols-[169px_169px_169px] grid-rows-[109px_109px_109px_109px]">
        {LAYOUTS.map((l, i) => (
          <div key={i} className={`flex items-center justify-center ${i === 1 ? 'border-2 border-black' : ''}`}>
            <LayoutThumb boxes={l.boxes} lines={l.lines} />
          </div>
        ))}
      </div>
    </div>
  );
}

function SideTabs() {
  return (
    <div className="ml-[1px] flex h-full w-[61px] shrink-0 flex-col">
      <svg width={16} height={16} viewBox="0 0 16 16" className="ml-[27px] mt-[25px]">
        <path d="M0 2H12M0 5H12M0 8H12M0 11H12" stroke="#444" strokeWidth="1.5" />
        <path d="M7 11H16L11.5 16Z" fill="#222" />
      </svg>
      <div className="ml-[15px] mt-[24px] h-px w-[39px] bg-[#dcdad7]" />
      <div className="ml-[7px] mt-[5px] flex h-[52px] w-[53px] items-center justify-center rounded-[5px] border border-[#c9c7c4] bg-[#f5f4f3]">
        <svg width={36} height={38} viewBox="0 0 36 38">
          <path d="M3 6L8 11L12 8L8 2C14 0 18 5 17 11L30 26C36 26 36 32 33 36L29 31L26 33L29 37C24 38 20 34 21 29L8 15C3 16 0 11 3 6Z" fill="#f5f5f5" stroke="#888" strokeWidth="1.4" />
        </svg>
      </div>
      <svg width={38} height={30} viewBox="0 0 38 30" className="ml-[15px] mt-[17px]">
        <rect x="1" y="5" width="18" height="22" fill="#f4f4f4" stroke="#888" strokeWidth="1.6" />
        <path d="M4 11H16M4 16H16M4 21H16" stroke="#888" />
        <rect x="14" y="1" width="24" height="28" fill="#7c5a8e" />
        <rect x="19" y="7" width="19" height="6" fill="#e8e3ec" />
        <rect x="19" y="16" width="13" height="9" fill="#a68bb5" />
      </svg>
      <svg width={38} height={36} viewBox="0 0 38 36" className="ml-[15px] mt-[25px]">
        <path d="M15 1L20 11L31 13L23 21L25 32L15 27L5 32L7 21L0 13L10 11Z" fill="#f7e254" stroke="#c7a016" strokeWidth="2" />
        <path d="M28 4H38M31 9H38M32 23H38M30 28H38M30 33H38" stroke="#d6c25a" strokeWidth="1.6" />
      </svg>
      <svg width={38} height={30} viewBox="0 0 38 30" className="ml-[15px] mt-[23px]">
        <rect x="0.5" y="0.5" width="37" height="29" rx="2" fill="url(#blueBox)" stroke="#335b97" />
        <path d="M6 7H32M6 4V10M32 4V10M6 14H32M6 19H22M6 24H16" stroke="#e6eefa" strokeWidth="1.5" />
      </svg>
      <svg width={38} height={36} viewBox="0 0 38 36" className="ml-[15px] mt-[28px]">
        <path d="M6 1H36V7H26V28H16V7H6Z" fill="#555" />
        <path d="M0 12L36 36H0Z" fill="#8cc04a" stroke="#55891f" />
        <path d="M6 26L14 32H6Z" fill="#6ea431" />
      </svg>
      <svg width={38} height={32} viewBox="0 0 38 32" className="ml-[15px] mt-[20px]">
        <path d="M14 6L19 0L24 6" fill="none" stroke="#777" />
        <rect x="1.5" y="6" width="35" height="25" rx="2" fill="url(#sunset)" stroke="#b67c25" strokeWidth="3" />
        <path d="M19 28V16M19 20L13 12M19 19L25 12" stroke="#2b241a" strokeWidth="1.5" fill="none" />
      </svg>
      <svg width={38} height={36} viewBox="0 0 38 36" className="ml-[15px] mt-[27px]">
        <circle cx="19" cy="18" r="16" fill="#fbfbfb" stroke="#a5a5a5" strokeWidth="3.4" />
        <path d="M26 10L20 20L17 17Z" fill="#d8343a" />
        <path d="M12 26L17 17L20 20Z" fill="#3f6aa6" />
      </svg>
    </div>
  );
}

export default function App() {
  return (
    <div className={`relative flex h-[1187px] w-[2351px] flex-col overflow-hidden bg-[#f2f1f0] ${UI}`}>
      <Defs />
      <TopToolbar />
      <div className="h-[2px] shrink-0 bg-[#d3d1ce]" />
      <div className="flex h-[1017px] shrink-0 border-b-2 border-[#b0aeab]">
        <SlidesPanel />
        <Splitter />
        <div className="flex h-full w-[1380px] shrink-0 flex-col">
          <div className="flex h-[51px] shrink-0 items-end pl-[16px] text-[25px] leading-none">
            <div className="flex h-[46px] w-[102px] shrink-0 items-center justify-center rounded-t-[6px] border border-b-0 border-[#cfcdca] bg-[#f6f5f4] text-[#3f3f3f]">Normal</div>
            <Tab label="Outline" c="ml-[3px] w-[104px]" />
            <Tab label="Notes" c="ml-[3px] w-[84px]" />
            <Tab label="Handout" c="ml-[2px] w-[120px]" />
            <Tab label="Slide Sorter" c="ml-[3px] w-[149px]" />
          </div>
          <div className="flex min-h-0 flex-1">
            <div className="flex h-full w-[1356px] shrink-0 flex-col">
              <Canvas />
              <HScroll />
            </div>
            <VScroll />
          </div>
        </div>
        <Splitter right />
        <PropertiesPanel />
        <SideTabs />
      </div>
      <div className="h-[3px] shrink-0 bg-white" />
      <BottomToolbar />
      <div className="h-[2px] shrink-0 bg-[#c3c1be]" />
      <StatusBar />
      <div className="h-[2px] shrink-0 bg-[#2c1a2a]" />
    </div>
  );
}
